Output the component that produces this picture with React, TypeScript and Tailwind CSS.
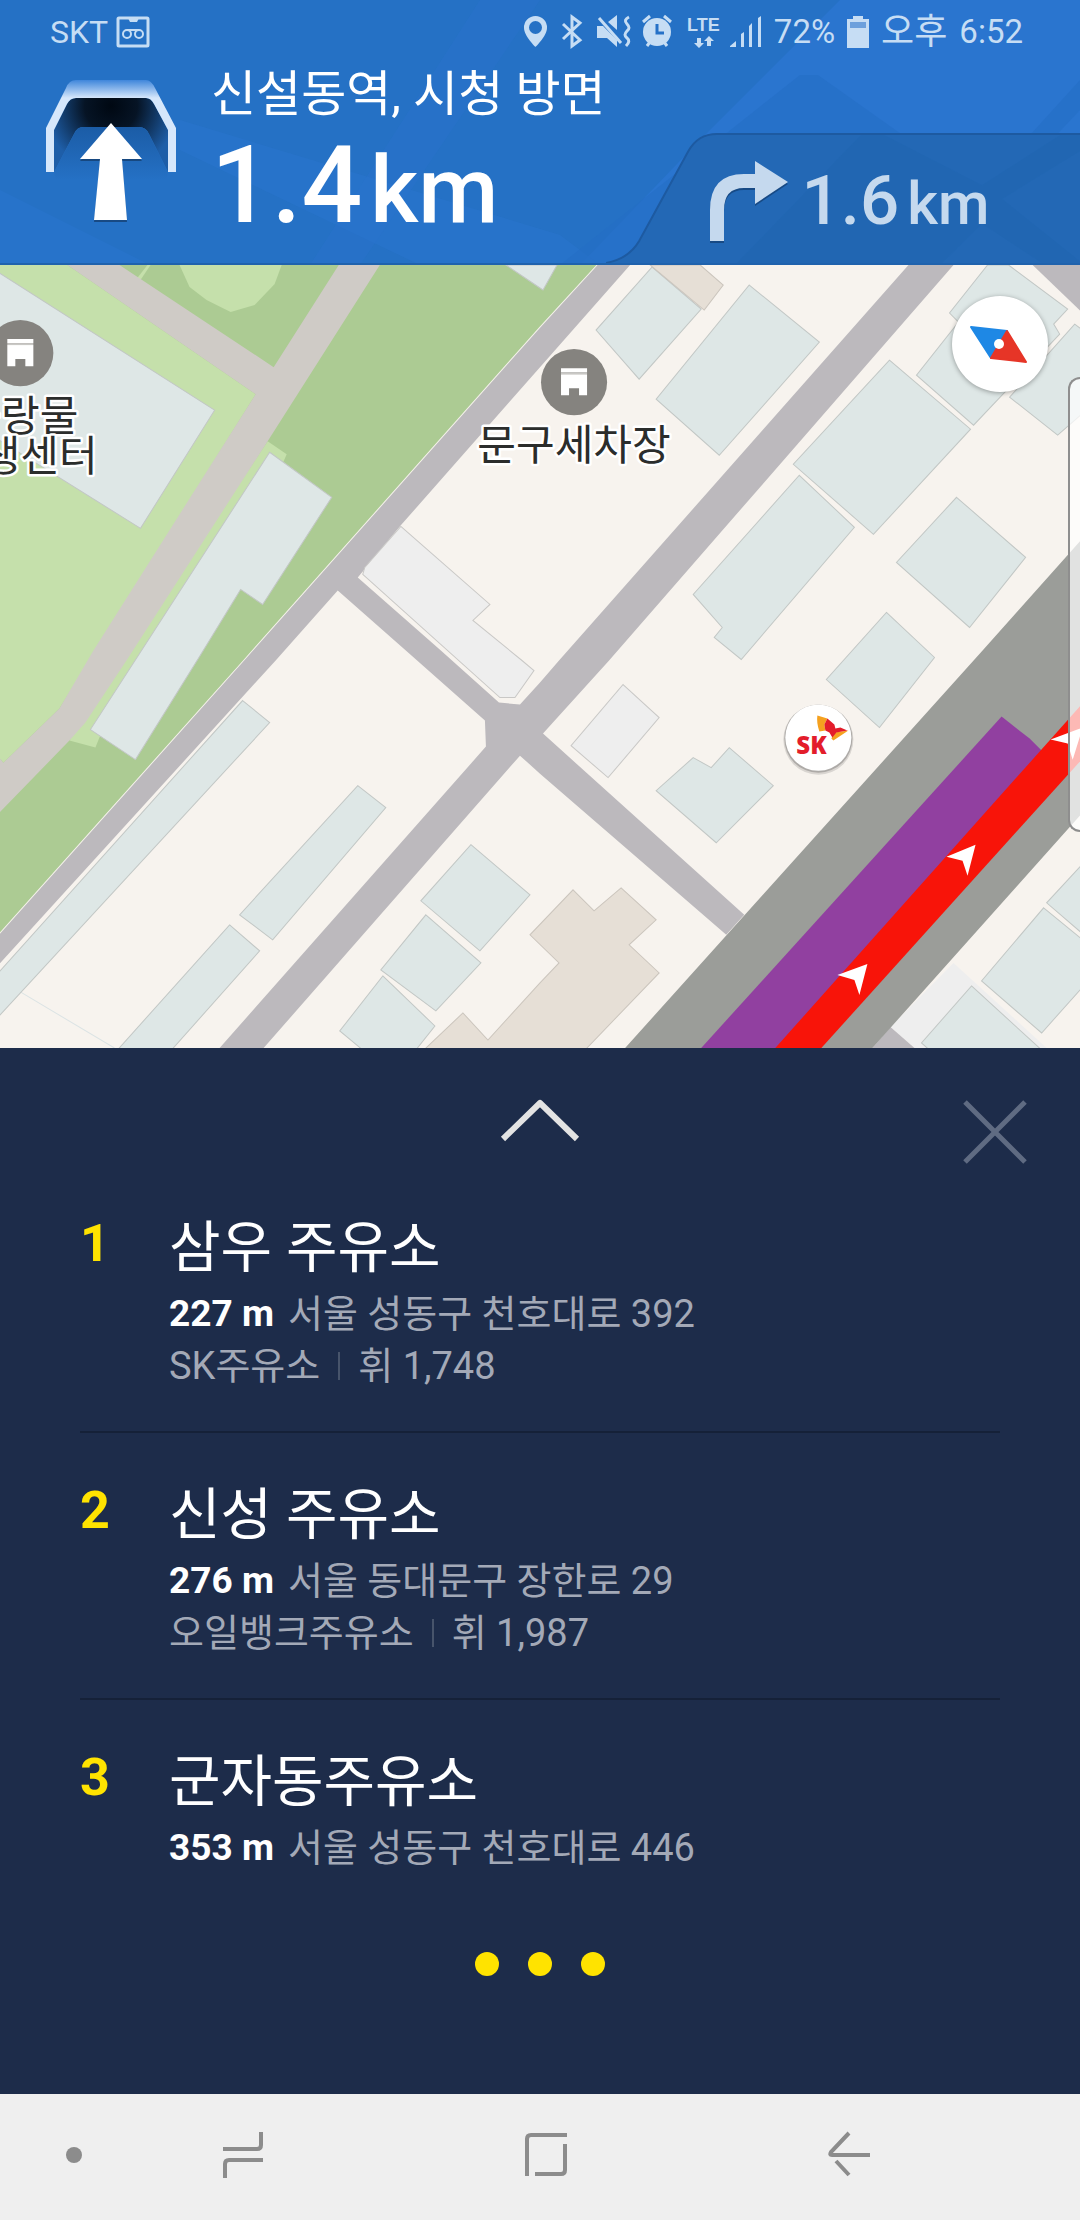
const buildings = [
  '0,273 215,410 141,528 0,440',
  '270,452 332,497 263,604 241,589 200,656 136,759 91,729',
  '506,265 540,288 543,290 557,265',
  '652,267 701,309 639,379 596,330',
  '749,285 819,342 719,455 656,399',
  '889,360 970,429 873,534 793,464',
  '799,475 854,527 741,659 714,637 722,627 693,594',
  '956,497 1025,557 969,627 896,562',
  '886,612 934,657 879,727 826,679',
  '987,265 1008,265 1067,309 1053,324 1059,334 973,425 916,375 958,322 949,313',
  '1074,324 1082,330 1082,413 1057,435 1009,397',
  '693,757 711,767 729,747 773,785 716,842 656,790',
  '243,700 270,722 -2,1017 -2,973',
  '358,785 386,807 273,939 240,914',
  '230,924 260,950 172,1049 118,1049',
  '471,844 530,894 480,950 421,900',
  '426,914 481,962 436,1010 381,969',
  '383,975 435,1025 416,1049 363,1049 340,1030',
];

const eastBuildings = [
  '971,985 1041,1049 929,1049 921,1042',
  '1043,907 1082,939 1082,986 1041,1032 981,980',
  '1082,863 1046,902 1082,933',
];

const sandBuildings = [
  '650,265 700,265 723,285 704,310',
  '573,889 594,910 621,887 656,919 629,944 659,972 585,1049 424,1049 463,1012 488,1039 540,982 559,962 530,934',
];

const greyBuildings = [
  '401,526 490,604 473,620 522,660 534,670 515,697 500,697 363,574 365,567',
  '623,684 659,717 608,777 571,745',
];

const courseArrows = ['975,844 946,856 962,860 967,875', '867,963 837,974 854,979 859,994', '1082,727 1050,739 1067,743 1072,759'];

function Pin({ x, y, lines }: { x: number; y: number; lines: string[] }) {
  return (
    <g>
      <circle cx={x} cy={y} r={33} fill="#85837f" />
      <path d={`M${x - 13} ${y - 14}h26v4h-26zM${x - 13} ${y - 8}h26v21h-8v-7h-10v7h-8z`} fill="#fff" />
      <path d={`M${x - 13} ${y - 10}h26v2h-26z`} fill="#c9c8c5" />
      {lines.map((line, i) => (
        <text
          key={line}
          x={x}
          y={y + 78 + i * 40}
          textAnchor="middle"
          fontSize={42}
          fontFamily="'Noto Sans CJK KR', sans-serif"
          fill="#2b2d2c"
          stroke="#fff"
          strokeWidth={5}
          strokeLinejoin="round"
          paintOrder="stroke"
        >
          {line}
        </text>
      ))}
    </g>
  );
}

function MapCanvas() {
  return (
    <svg viewBox="0 265 1080 782" preserveAspectRatio="xMidYMid slice" className="absolute inset-0 size-full" role="img" aria-label="지도">
      <path d="M0 265H1080V1047H0z" fill="#f7f3ee" />
      <path d="M0 265H597L540 327 244 660 0 933z" fill="#accb93" />
      <g fill="#c5e0ab">
        <path d="M0 265H68L256 394 60 708 4 762 0 757z" />
        <path d="M268 441 287 454 284 461 100 737 96 747 70 740z" />
        <path d="M180 265 190 287 207 300 231 312 255 305 275 284 282 265z" />
        <path d="M137 279 148 265H151L141 280z" />
      </g>
      <path d="M120 265 274 367 339 265H380L268 441 127 660 86 722 70 740 0 812V757L4 762 60 708 94 650 256 394 68 265z" fill="#cfcbc6" />
      <path
        d="M597 265H630L540 367 401 525 358 577 441 650 499 702 520 704 540 682 559 660 908 265H953L609 660 543 733 744 914 726 934 540 773 520 755 264 1047H220L486 746 485 720 406 650 338 590 276 660 0 963V933L244 660 540 327z"
        fill="#bcb9bd"
      />
      <path d="M597 265 540 327 244 660 0 933" fill="none" stroke="#f3f1e8" strokeWidth="1" />
      <path d="M1032 265H1080V311z" fill="#bcb9bd" />
      <path d="M0 978 21 991 115 1047" fill="none" stroke="#dbe3e4" strokeWidth="1" />
      <g fill="#dee7e6" stroke="#c2c7c5" strokeWidth="1">
        {buildings.map((p) => (
          <polygon key={p} points={p} />
        ))}
      </g>
      <g fill="#e6dfd6" stroke="#cbc5bd" strokeWidth="1">
        {sandBuildings.map((p) => (
          <polygon key={p} points={p} />
        ))}
      </g>
      <g fill="#eeeeee" stroke="#c9c8c6" strokeWidth="1">
        {greyBuildings.map((p) => (
          <polygon key={p} points={p} />
        ))}
      </g>
      <path d="M953 962 1046 1047H914L890 1026z" fill="#eeeeee" />
      <path d="M890 1026 914 1047H872z" fill="#bcb9bd" />
      <g fill="#dee7e6" stroke="#c2c7c5" strokeWidth="1">
        {eastBuildings.map((p) => (
          <polygon key={p} points={p} />
        ))}
      </g>
      <path d="M1080 540 982 650 625 1047H872L1080 814z" fill="#9b9d99" />
      <path d="M1001 716 1029 738 1041 750 778 1047H701z" fill="#9140a0" />
      <path d="M775 1047 1080 705V760L821 1047z" fill="#f81409" />
      <g fill="#fff">
        {courseArrows.map((p) => (
          <polygon key={p} points={p} />
        ))}
      </g>
      <Pin x={574} y={382} lines={['문구세차장']} />
      <Pin x={21} y={353} lines={['중랑물', '재생센터']} />
      <circle cx="818" cy="739" r="35" fill="#000" opacity="0.12" />
      <circle cx="818" cy="738" r="34" fill="#000" opacity="0.2" />
      <circle cx="818" cy="737" r="33" fill="#fff" />
      <path d="M817 715 827 718 824 724 825 730 819 731Q816 722 817 715zM831 738 834 732 848 730 833 740z" fill="#f5a11f" />
      <path d="M827 718 834 724 835 728 840 727 847 730 836 732 832 737 829 732 825 730 824 724z" fill="#e31d2b" />
      <text x="796" y="753" fontSize="24" fontWeight="800" fontFamily="'Open Sans', sans-serif" fill="#e31d2b">
        SK
      </text>
    </svg>
  );
}

function StatusIcons() {
  return (
    <svg viewBox="520 14 240 36" className="h-9 w-60" fill="#c6ddf4" aria-hidden="true">
      <path fillRule="evenodd" d="M533.500 16a11.500 11.500 0 0 0-11.500 12c0 8 11.500 19 11.500 19s11.500-11 11.500-19a11.500 11.500 0 0 0-11.500-12zm0 5a6.500 6.500 0 1 1 0 13 6.500 6.500 0 0 1 0-13z" />
      <path d="M561 24 578 40 570 46V17L578 23 561 39" fill="none" stroke="#c6ddf4" strokeWidth="3" />
      <path d="M595 26h6l14 14v7l-10-9h-10zM606 22l9-7v15z" />
      <path d="M597 18 619 43" stroke="#c6ddf4" strokeWidth="3" />
      <path d="M627 17q-6 3-2 7t0 7q-4 4 0 7t-1 8" fill="none" stroke="#c6ddf4" strokeWidth="3" />
      <circle cx="655" cy="32" r="14" />
      <path d="M641 22l7-6M669 22l-7-6M645 46l3-4M665 46l-3-4" stroke="#c6ddf4" strokeWidth="3" />
      <path d="M655 24v9h7" fill="none" stroke="#2671c7" strokeWidth="3" />
      <text x="685" y="31" fontSize="18" fontWeight="700" fontFamily="'Liberation Sans', sans-serif">
        LTE
      </text>
      <path d="M695 38h4v5h3l-5 5-5-5h3zM705 46h4v-5h3l-5-5-5 5h3z" />
      <path d="M728 47v-1l6-5v6zM739 47V34l3-2v15zM747 47V26l3-3v24zM756 47V18l3-2v31z" />
    </svg>
  );
}

function TunnelIcon() {
  return (
    <svg viewBox="44 78 134 146" className="h-[146px] w-[134px] shrink-0" aria-hidden="true">
      <defs>
        <linearGradient id="rim" x1="0" y1="80" x2="0" y2="98" gradientUnits="userSpaceOnUse">
          <stop offset="0" stopColor="#3f86db" />
          <stop offset="1" stopColor="#d6e7fb" />
        </linearGradient>
        <radialGradient id="bore" cx="111" cy="106" r="66" gradientUnits="userSpaceOnUse">
          <stop offset="0" stopColor="#000812" />
          <stop offset="0.4" stopColor="#061425" />
          <stop offset="1" stopColor="#1e5ea8" />
        </radialGradient>
        <linearGradient id="floor" x1="0" y1="127" x2="0" y2="180" gradientUnits="userSpaceOnUse">
          <stop offset="0" stopColor="#1b5ca6" />
          <stop offset="1" stopColor="#2571c5" />
        </linearGradient>
      </defs>
      <path d="M54 172V130L67 104Q70 98 76 98H146Q151 98 154 104L168 130V172L149 134Q146 127 139 127H83Q77 127 74 134z" fill="url(#bore)" />
      <path d="M54 172 74 134Q77 127 83 127H139Q146 127 149 134L168 172 166 182H56z" fill="url(#floor)" />
      <path
        d="M46 172V128L66 88Q69 80 76 80H146Q151 80 155 88L176 128V172H168V130L154 104Q151 98 146 98H76Q70 98 67 104L54 130V172z"
        fill="url(#rim)"
      />
      <path d="M111 125 142 161H122L127 222H94L100 161H80z" fill="#123a68" opacity="0.7" />
      <path d="M111 123 142 159H122L127 220H94L100 159H80z" fill="#fff" />
    </svg>
  );
}

function Header() {
  return (
    <header className="relative z-10 bg-[#2571c5] text-white">
      <svg viewBox="0 0 1080 265" preserveAspectRatio="none" className="absolute inset-0 size-full" aria-hidden="true">
        <path d="M840 0H1080V265H580L700 140z" fill="#2a75cf" />
        <path d="M0 190 150 265H0zM180 120 560 235 600 265H420L180 150z" fill="#2a74cd" opacity="0.6" />
        <path d="M480 0H540L360 265H310z" fill="#2a74cd" opacity="0.35" />
        <path d="M800 75H818L980 190 1080 80V110L1000 195 1060 265H560z" fill="#256ec5" opacity="0.6" />
      </svg>
      <div className="relative flex h-16 items-center justify-between pr-[57px] pl-[50px] text-[33px] text-[#c6ddf4]">
        <div className="flex items-center gap-2">
          <span className="text-[32px]">SKT</span>
          <svg viewBox="0 0 34 32" className="h-8 w-[34px]" fill="none" stroke="#c6ddf4" strokeWidth="3" aria-hidden="true">
            <rect x="2" y="2" width="30" height="28" rx="1" />
            <circle cx="11" cy="18" r="4" strokeWidth="2" />
            <circle cx="23" cy="18" r="4" strokeWidth="2" />
            <path d="M11 14h12" strokeWidth="2" />
            <path d="M12 2h11l-2 4h-7z" fill="#c6ddf4" stroke="none" />
          </svg>
        </div>
        <div className="flex items-center gap-3">
          <StatusIcons />
          <span>72%</span>
          <svg viewBox="0 0 22 32" className="h-8 w-[22px]" fill="#c6ddf4" aria-hidden="true">
            <path d="M6 0h10v3h6v29H0V3h6z" />
            <path d="M3 6h16v6H3z" fill="#6da0dc" />
          </svg>
          <span className="text-[36px]">오후</span>
          <span>6:52</span>
        </div>
      </div>
      <div className="relative flex h-[201px] justify-between border-b-2 border-[#1f62ad]">
        <div className="flex pl-11">
          <div className="pt-[14px]">
            <TunnelIcon />
          </div>
          <div className="flex flex-col pl-[33px] whitespace-nowrap">
            <p className="text-[49px] leading-[62px] font-normal">신설동역, 시청 방면</p>
            <p className="text-[107px] leading-[120px] font-medium">
              1.4<span className="ml-2 text-[92px]">km</span>
            </p>
          </div>
        </div>
        <div className="relative flex h-[130px] w-[476px] shrink-0 items-center self-end pt-2 text-[#c5d9ee]">
          <svg viewBox="604 133 476 132" preserveAspectRatio="none" className="absolute inset-0 size-full" aria-hidden="true">
            <path d="M604 265C620 262 630 255 637 243L686 152C693 139 702 134 715 134H1080V265z" fill="#2368b5" />
            <path d="M735 265 860 134H880L980 186 1060 134H1080V150L1000 200 1080 265H1040L980 225 940 265z" fill="#2065b1" opacity="0.6" />
            <path d="M604 265C620 262 630 255 637 243L686 152C693 139 702 134 715 134H1080" fill="none" stroke="#1d5aa1" strokeWidth="2" />
          </svg>
          <svg viewBox="706 158 82 86" className="relative ml-[102px] h-[86px] w-[82px]" aria-hidden="true">
            <path d="M708 242V211Q708 175 742 175H753V162L786 183 753 205V189H742Q722 189 722 211V242z" fill="#174a85" />
            <path d="M708 240V209Q708 173 742 173H753V160L786 181 753 203V187H742Q722 187 722 209V240z" fill="#c5d9ee" />
          </svg>
          <p className="relative pl-3 text-[69px] leading-[80px] font-medium whitespace-nowrap">
            1.6<span className="ml-2 text-[59px]">km</span>
          </p>
        </div>
      </div>
    </header>
  );
}

const stations = [
  { name: '삼우 주유소', distance: '227 m', address: '서울 성동구 천호대로 392', brand: 'SK주유소', price: '휘 1,748' },
  { name: '신성 주유소', distance: '276 m', address: '서울 동대문구 장한로 29', brand: '오일뱅크주유소', price: '휘 1,987' },
  { name: '군자동주유소', distance: '353 m', address: '서울 성동구 천호대로 446' },
];

function StationList() {
  return (
    <section className="bg-[#1d2c4a] pb-[118px]">
      <div className="relative flex h-[118px] justify-center pt-[50px]">
        <button type="button" aria-label="목록 펼치기" className="h-12 w-20">
          <svg viewBox="0 0 80 48" className="h-12 w-20" fill="none" stroke="#e3e3e3" strokeWidth="6" strokeLinejoin="round">
            <path d="M3 41 40 5 77 41" />
          </svg>
        </button>
        <button type="button" aria-label="닫기" className="absolute top-[52px] right-[53px] size-16">
          <svg viewBox="0 0 64 64" className="size-16" stroke="#5f6b82" strokeWidth="5">
            <path d="M2 2 62 62M62 2 2 62" />
          </svg>
        </button>
      </div>
      <ol className="px-20">
        {stations.map((s, i) => (
          <li key={s.name} className={i > 0 ? 'border-t-2 border-[#152138]' : ''}>
            <button type="button" className={i < 2 ? 'flex w-full pt-[42px] pb-[39px] text-left' : 'flex w-full pt-[42px] pb-[78px] text-left'}>
              <span className="w-[89px] text-[52px] leading-[72px] font-bold text-[#ffe300]">{i + 1}</span>
              <span className="flex flex-col">
                <span className="text-[56px] leading-[80px] text-white">{s.name}</span>
                <span className="flex gap-[14px] text-[38px] leading-[52px] text-[#a3a9b7]">
                  <strong className="text-[37px] font-bold text-white">{s.distance}</strong>
                  <span>{s.address}</span>
                </span>
                {s.brand && (
                  <span className="flex items-center text-[38px] leading-[52px] text-[#a3a9b7]">
                    <span>{s.brand}</span>
                    <span className="mx-[18px] h-7 w-0.5 bg-[#47546b]" />
                    <span>{s.price}</span>
                  </span>
                )}
              </span>
            </button>
          </li>
        ))}
      </ol>
      <div className="flex justify-center gap-[29px]">
        <span className="size-6 rounded-full bg-[#ffe300]" />
        <span className="size-6 rounded-full bg-[#ffe300]" />
        <span className="size-6 rounded-full bg-[#ffe300]" />
      </div>
    </section>
  );
}

function NavBar() {
  return (
    <nav className="flex h-[126px] items-center bg-[#efefef] pr-20 pb-1 pl-14">
      <button type="button" aria-label="탐색 바 숨기기" className="flex h-12 w-9 items-center justify-center">
        <span className="size-4 rounded-full bg-[#8c8c8c]" />
      </button>
      <div className="grid flex-1 grid-cols-3 justify-items-center">
        <button type="button" aria-label="최근 앱">
          <svg viewBox="0 0 44 48" className="h-12 w-11" fill="none" stroke="#8c8c8c" strokeWidth="4">
            <path d="M40 1V14Q40 18 36 18H2M42 29H8Q4 29 4 33V47" />
          </svg>
        </button>
        <button type="button" aria-label="홈">
          <svg viewBox="0 0 44 48" className="h-12 w-11" fill="none" stroke="#8c8c8c" strokeWidth="4">
            <path d="M3 45V8Q3 4 7 4H43M41 13V39Q41 43 37 43H11" />
          </svg>
        </button>
        <button type="button" aria-label="뒤로">
          <svg viewBox="0 0 44 48" className="h-12 w-11" fill="none" stroke="#8c8c8c" strokeWidth="4">
            <path d="M22 2 4 21Q2 24 5 24H43M9 30 22 44" />
          </svg>
        </button>
      </div>
    </nav>
  );
}

export default function App() {
  return (
    <div className="flex min-h-screen flex-col bg-[#1d2c4a] font-[Roboto,'Noto_Sans_CJK_KR',sans-serif]">
      <Header />
      <main className="flex flex-1 flex-col">
        <div className="relative min-h-[480px] flex-1 overflow-hidden">
          <MapCanvas />
          <button type="button" aria-label="나침반" className="absolute top-[31px] right-8 size-24 rounded-full bg-white shadow-[0_1px_5px_rgba(0,0,0,0.35)]">
            <svg viewBox="0 0 96 96" className="size-24">
              <path d="M19 31 55 35 39 62z" fill="#1e88e5" stroke="#1e88e5" strokeWidth="2" strokeLinejoin="round" />
              <path d="M55 35 74 66 39 62z" fill="#e63527" stroke="#e63527" strokeWidth="2" strokeLinejoin="round" />
              <circle cx="47" cy="48" r="5" fill="#fff" />
            </svg>
          </button>
          <span className="absolute top-[112px] right-0 h-[455px] w-3 rounded-l-xl border-2 border-r-0 border-[#8e8e8e] bg-white/70" />
        </div>
        <StationList />
      </main>
      <NavBar />
    </div>
  );
}
